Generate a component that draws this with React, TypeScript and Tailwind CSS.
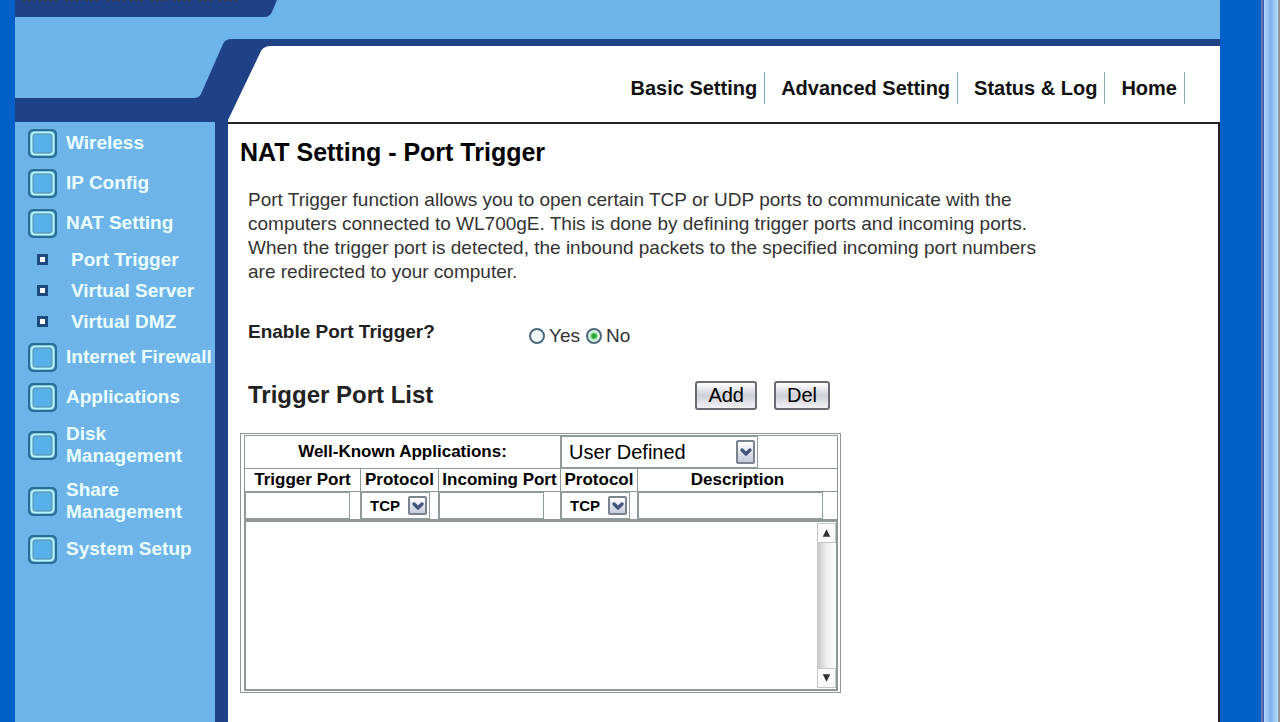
import type { ReactNode } from "react";
import { ChevronDown } from "lucide-react";

const topLinks = ["Basic Setting", "Advanced Setting", "Status & Log", "Home"];

type MenuItem = { label: string; tall?: boolean; children?: string[] };

const menu: MenuItem[] = [
  { label: "Wireless" },
  { label: "IP Config" },
  { label: "NAT Setting", children: ["Port Trigger", "Virtual Server", "Virtual DMZ"] },
  { label: "Internet Firewall" },
  { label: "Applications" },
  { label: "Disk Management", tall: true },
  { label: "Share Management", tall: true },
  { label: "System Setup" },
];

export default function App() {
  return (
    <div className="flex min-h-screen bg-[#0060c8] pl-[15px] font-['Liberation_Sans',Arial,sans-serif] text-black">
      <div className="flex min-w-0 flex-1 flex-col">
        <Header />
        <div className="flex flex-1 bg-[#1f4287]">
          <Sidebar />
          <main className="ml-[13px] min-w-0 flex-1 border-t-2 border-r-2 border-[#222] bg-white">
            <PortTrigger />
          </main>
        </div>
      </div>
      <div className="w-[41px] shrink-0" />
      <WindowEdge />
    </div>
  );
}

function Header() {
  return (
    <header className="flex h-[122px] bg-[#6fb4e8]">
      <svg className="shrink-0" width="285" height="122" viewBox="0 0 285 122" aria-hidden="true">
        <path d="M0 0H262L257 12Q255 17 249 17H0Z" fill="#1f4287" />
        <path d="M8 0H20M24 0H42M50 0H66M70 0H84M92 0H110M115 0H128M136 0H152M158 0H178M184 0H198M204 0H224" stroke="#3b3f52" strokeWidth="3" strokeDasharray="3 2" />
        <path d="M0 98H179Q184 98 186 94L208 44Q210 39 217 39H285V122H0Z" fill="#1f4287" />
        <path d="M213 122V120L246 51Q249 46 256 46H285V122Z" fill="#fff" />
      </svg>
      <div className="flex min-w-0 flex-1 flex-col">
        <div className="h-[39px]" />
        <div className="h-[7px] bg-[#1f4287]" />
        <nav className="flex flex-1 items-center justify-end bg-white pt-2 pr-[35px]">
          {topLinks.map((link) => (
            <a
              key={link}
              href="#"
              className="ml-4 flex h-8 items-center border-r border-[#7fb0b4] pr-[7px] text-[20px] font-bold whitespace-nowrap text-[#111]"
            >
              {link}
            </a>
          ))}
        </nav>
      </div>
    </header>
  );
}

function Sidebar() {
  return (
    <nav className="w-[200px] shrink-0 bg-[#6fb4e8] pt-px text-[19px] leading-[22px] font-bold text-[#eaffff]">
      <ul>
        {menu.map((item) => (
          <li key={item.label}>
            <a
              href="#"
              className={
                item.tall
                  ? "flex h-14 items-center gap-[9px] pl-[13px]"
                  : "flex h-10 items-center gap-[9px] pl-[13px] whitespace-nowrap"
              }
            >
              <MenuIcon />
              <span>{item.label}</span>
            </a>
            {item.children && (
              <ul className="pt-px">
                {item.children.map((child) => (
                  <li key={child}>
                    <a href="#" className="flex h-[31px] items-center gap-[23px] pl-[22px]">
                      <span className="size-[11px] shrink-0 border-3 border-[#1c4a7c] bg-white" />
                      <span>{child}</span>
                    </a>
                  </li>
                ))}
              </ul>
            )}
          </li>
        ))}
      </ul>
    </nav>
  );
}

function MenuIcon() {
  return (
    <svg className="shrink-0" width="29" height="29" viewBox="0 0 29 29" aria-hidden="true">
      <rect x="1" y="1" width="27" height="27" rx="4" fill="#4a9cc4" stroke="#2a6c94" strokeWidth="2" />
      <rect x="3.5" y="3.5" width="22" height="22" rx="3.5" fill="#59b1ea" stroke="#b9f6ff" strokeWidth="2.2" />
      <rect x="5.3" y="5.3" width="18.4" height="18.4" rx="2" fill="none" stroke="#5f9fbc" strokeWidth="1.4" />
    </svg>
  );
}

function PortTrigger() {
  return (
    <form className="pb-7" onSubmit={(e) => e.preventDefault()}>
      <h1 className="pt-3 pl-3 text-[25px] leading-8 font-bold">NAT Setting - Port Trigger</h1>
      <p className="mt-5 ml-5 max-w-[810px] text-[19px] leading-6 text-[#333]">
        Port Trigger function allows you to open certain TCP or UDP ports to communicate with the
        computers connected to WL700gE. This is done by defining trigger ports and incoming ports.
        When the trigger port is detected, the inbound packets to the specified incoming port numbers
        are redirected to your computer.
      </p>

      <fieldset className="mt-8 ml-5 flex h-8 items-center">
        <legend className="float-left w-[281px] text-[19px] leading-6 font-bold text-[#222]">
          Enable Port Trigger?
        </legend>
        <RadioOption id="trigger-yes" label="Yes" />
        <RadioOption id="trigger-no" label="No" checked />
      </fieldset>

      <div className="mt-8 ml-5 flex h-[30px] w-[582px] items-center">
        <h2 className="flex-1 text-[24px] leading-[30px] font-bold text-[#222]">Trigger Port List</h2>
        <PushButton>Add</PushButton>
        <span className="w-[17px]" />
        <PushButton>Del</PushButton>
      </div>

      <div className="mt-[23px] ml-3 w-[601px] border border-[#8f9797] pt-px pr-[2px] pb-px pl-[3px]">
        <table className="w-full table-fixed border-collapse text-[17px] leading-5 font-bold">
          <colgroup>
            <col className="w-[116px]" />
            <col className="w-[78px]" />
            <col className="w-[122px]" />
            <col className="w-[77px]" />
            <col />
          </colgroup>
          <thead>
            <tr className="h-[33px]">
              <th colSpan={3} className="border border-[#8f9797] p-0">
                <label htmlFor="known-apps">Well-Known Applications:</label>
              </th>
              <td colSpan={2} className="border border-[#8f9797] p-0">
                <DropDown
                  id="known-apps"
                  value="User Defined"
                  className="h-8 w-[197px] pl-[7px] text-[20px] font-normal"
                  wrap="w-[197px]"
                />
              </td>
            </tr>
            <tr className="h-[23px]">
              {["Trigger Port", "Protocol", "Incoming Port", "Protocol", "Description"].map((h, i) => (
                <th key={i} className="border border-[#8f9797] p-0 whitespace-nowrap">
                  {h}
                </th>
              ))}
            </tr>
          </thead>
          <tbody>
            <tr className="h-[28px]">
              <Cell><PortInput label="Trigger Port" className="w-[105px]" /></Cell>
              <Cell><ProtocolSelect id="trigger-protocol" label="Trigger protocol" /></Cell>
              <Cell><PortInput label="Incoming Port" className="w-[105px]" /></Cell>
              <Cell><ProtocolSelect id="incoming-protocol" label="Incoming protocol" /></Cell>
              <Cell><PortInput label="Description" className="w-[185px]" /></Cell>
            </tr>
          </tbody>
        </table>
        <RuleList />
      </div>
    </form>
  );
}

function Cell({ children }: { children: ReactNode }) {
  return <td className="border border-[#8f9797] p-0">{children}</td>;
}

function RadioOption({ id, label, checked }: { id: string; label: string; checked?: boolean }) {
  return (
    <div className="mr-[6px] flex items-center gap-1 pt-2">
      <input
        id={id}
        type="radio"
        name="trigger"
        defaultChecked={checked}
        className="size-4 appearance-none rounded-full border-2 border-[#4d6a7c] bg-[#f1f6f6] checked:bg-[radial-gradient(circle,#1f9a2c_0,#2fae3c_2px,#c9efcd_4px,#effaf0_6px)]"
      />
      <label htmlFor={id} className="text-[19px] leading-6 text-[#333]">
        {label}
      </label>
    </div>
  );
}

function PushButton({ children }: { children: ReactNode }) {
  return (
    <button
      type="button"
      className="h-[29px] rounded-[3px] border-2 border-[#686c72] bg-linear-to-b from-white via-[#cfd0d8] to-[#f2f2f5] px-[11px] text-[20px] leading-6"
    >
      {children}
    </button>
  );
}

function PortInput({ label, className }: { label: string; className: string }) {
  return (
    <input
      type="text"
      aria-label={label}
      className={`block h-[27px] border border-[#8f9ca0] px-1 ${className}`}
    />
  );
}

function DropDown({
  id,
  label,
  value,
  className,
  wrap,
}: {
  id: string;
  label?: string;
  value: string;
  className: string;
  wrap: string;
}) {
  return (
    <div className={`relative ${wrap}`}>
      <select
        id={id}
        aria-label={label}
        className={`block appearance-none border border-[#8f9ca0] bg-white ${className}`}
      >
        <option>{value}</option>
      </select>
      <span className="pointer-events-none absolute inset-y-1 right-[3px] flex w-[19px] items-center justify-center rounded-[2px] border-2 border-[#7a838e] bg-linear-to-b from-white to-[#c5cbdc]">
        <ChevronDown className="size-4 shrink-0 text-[#46557a]" strokeWidth={5} />
      </span>
    </div>
  );
}

function ProtocolSelect({ id, label }: { id: string; label: string }) {
  return (
    <DropDown
      id={id}
      label={label}
      value="TCP"
      className="h-[27px] w-[69px] pl-2 text-[15px] font-bold"
      wrap="w-[69px]"
    />
  );
}

function RuleList() {
  return (
    <div className="flex h-[171px] border-2 border-[#8f9797]">
      <select multiple aria-label="Trigger Port List" className="min-w-0 flex-1 bg-white" />
      <div className="my-px flex w-[19px] flex-col bg-linear-to-r from-[#c4c4c4] via-[#eee] to-white">
        <ScrollArrow d="M5 13L9 5L13 13Z" />
        <div className="flex-1" />
        <ScrollArrow d="M5 5L9 13L13 5Z" />
      </div>
    </div>
  );
}

function ScrollArrow({ d }: { d: string }) {
  return (
    <span className="flex h-5 items-center justify-center border border-[#c5c8c8] bg-[#fafafa]">
      <svg width="18" height="18" viewBox="0 0 18 18" aria-hidden="true">
        <path d={d} fill="#333" />
      </svg>
    </span>
  );
}

function WindowEdge() {
  return (
    <div className="flex w-[19px] shrink-0">
      <div className="w-[3px] bg-linear-to-r from-[#8088b8] to-[#2f4fb0]" />
      <div className="flex-1 bg-linear-to-r from-[#b5d8f8] via-[#7eb0f0] to-[#b5e4fc]" />
      <div className="w-[2px] bg-[#8f9797]" />
    </div>
  );
}
